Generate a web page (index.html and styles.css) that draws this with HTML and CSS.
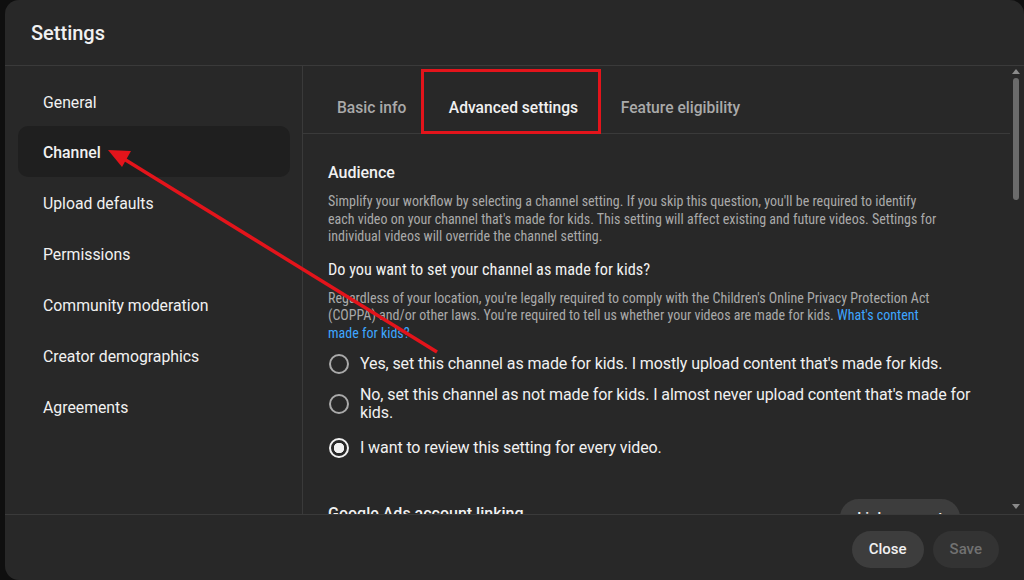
FILE: index.html
```html
<!DOCTYPE html>
<html lang="en">
<head>
    <title>Settings</title>
    <link rel="stylesheet" href="styles.css">
</head>
<body>
<div class="dialog">
    <div class="dialog_header">Settings</div>

    <div class="dialog_body">
        <!-- left menu -->
        <ul class="side_menu">
            <li class="side_item">General</li>
            <li class="side_item selected">Channel</li>
            <li class="side_item">Upload defaults</li>
            <li class="side_item">Permissions</li>
            <li class="side_item">Community moderation</li>
            <li class="side_item">Creator demographics</li>
            <li class="side_item">Agreements</li>
        </ul>

        <div class="main_panel">
            <div class="panel_inner">
                <div class="tabs">
                    <span class="tab">Basic info</span>
                    <span class="tab active">Advanced settings</span>
                    <span class="tab">Feature eligibility</span>
                </div>

                <div class="content">
                    <h2 class="section_title">Audience</h2>
                    <p class="section_text">
                        Simplify your workflow by selecting a channel setting. If you skip this question, you'll be required to identify<br>
                        each video on your channel that's made for kids. This setting will affect existing and future videos. Settings for<br>
                        individual videos will override the channel setting.
                    </p>

                    <h3 class="question">Do you want to set your channel as made for kids?</h3>
                    <p class="section_text">
                        Regardless of your location, you're legally required to comply with the Children's Online Privacy Protection Act<br>
                        (COPPA) and/or other laws. You're required to tell us whether your videos are made for kids.
                        <a class="link" href="#">What's content<br>made for kids?</a>
                    </p>

                    <div class="radio_group">
                        <label class="radio_row">
                            <span class="radio"></span>
                            <span class="radio_label">Yes, set this channel as made for kids. I mostly upload content that's made for kids.</span>
                        </label>
                        <label class="radio_row">
                            <span class="radio"></span>
                            <span class="radio_label">No, set this channel as not made for kids. I almost never upload content that's made for<br>kids.</span>
                        </label>
                        <label class="radio_row last">
                            <span class="radio checked"></span>
                            <span class="radio_label">I want to review this setting for every video.</span>
                        </label>
                    </div>

                    <div class="ads_row">
                        <h2 class="section_title">Google Ads account linking</h2>
                        <button type="button" class="pill_btn">Link account</button>
                    </div>
                </div>
            </div>

            <div class="scrollbar">
                <span class="sb_arrow up"></span>
                <span class="sb_thumb"></span>
                <span class="sb_arrow down"></span>
            </div>
        </div>
    </div>

    <div class="dialog_footer">
        <button type="button" class="pill_btn">Close</button>
        <button type="button" class="pill_btn" disabled>Save</button>
    </div>
</div>

<!-- red annotation drawn over the screenshot -->
<div class="mark_box"></div>
<svg class="mark_arrow" width="1024" height="580" viewBox="0 0 1024 580">
    <line x1="437" y1="352" x2="124" y2="159" stroke="#e3141b" stroke-width="3.5"/>
    <polygon points="108,150 131,151 122,167" fill="#e3141b"/>
</svg>
</body>
</html>
```

FILE: styles.css
```css
* {
    box-sizing: border-box;
}

body {
    margin: 0;
    background-color: #0f0f0f;
    font-family: Roboto, "Liberation Sans", Arial, sans-serif;
    color: #f1f1f1;
    overflow: hidden;
}

.dialog {
    margin-left: 5px;
    height: 580px;
    background-color: #282828;
    border-radius: 14px 14px 0 14px;
    display: flex;
    flex-direction: column;
}

.dialog_header {
    height: 66px;
    padding-left: 26px;
    line-height: 66px;
    font-size: 20px;
    font-weight: 500;
    border-bottom: 1px solid #3a3a3a;
}

.dialog_body {
    flex: 1;
    display: flex;
    min-height: 0;
}

.side_menu {
    list-style: none;
    margin: 0;
    width: 298px;
    padding: 9px 12px 0 13px;
    border-right: 1px solid #3a3a3a;
}

.side_item {
    height: 50.9px;
    line-height: 50.9px;
    padding: 2.5px 0 0 25px;
    font-size: 15.8px;
    color: #f1f1f1;
    border-radius: 10px;
}

.side_item.selected {
    background-color: #1f1f1f;
    font-weight: 500;
}

.main_panel {
    flex: 1;
    display: flex;
    min-width: 0;
}

.panel_inner {
    flex: 1;
    display: flex;
    flex-direction: column;
    min-width: 0;
}

.tabs {
    height: 68px;
    padding: 16px 0 0 12.7px;
    display: flex;
    align-items: center;
    border-bottom: 1px solid #3a3a3a;
}

.tab {
    padding: 0 21.3px;
    font-size: 15.6px;
    font-weight: 500;
    color: #aaaaaa;
}

.tab.active {
    color: #f1f1f1;
}

.content {
    flex: 1;
    overflow: hidden;
    padding: 28px 30px 0 25px;
}

.section_title {
    margin: 0;
    font-size: 16px;
    font-weight: 500;
    line-height: 22px;
    white-space: nowrap;
}

.section_text {
    margin: 9px 0 0;
    font-size: 14px;
    line-height: 17.5px;
    color: #aaaaaa;
    font-stretch: 75%;
    white-space: nowrap;
}

.question {
    margin: 13px 0 0;
    font-size: 16.3px;
    font-weight: 400;
    line-height: 22px;
    font-stretch: 75%;
}

.link {
    color: #3ea6ff;
    text-decoration: none;
}

.radio_group {
    margin-top: 12px;
    display: flex;
    flex-direction: column;
    gap: 12px;
}

.radio_row {
    display: flex;
    align-items: center;
    gap: 11px;
}

.radio_row.last {
    margin-top: 4px;
}

.radio {
    flex: none;
    width: 20px;
    height: 20px;
    margin-left: 1px;
    border: 2px solid #aaaaaa;
    border-radius: 50%;
}

.radio.checked {
    border-color: #f1f1f1;
    background: radial-gradient(circle, #f1f1f1 0 5px, transparent 5.5px);
}

.radio_label {
    font-size: 16px;
    line-height: 18px;
    font-stretch: 88.5%;
    letter-spacing: -0.1px;
    white-space: nowrap;
}

.ads_row {
    margin-top: 41px;
    display: flex;
    justify-content: space-between;
    align-items: flex-start;
    padding-right: 20px;
}

.ads_row .section_title {
    margin-top: 4px;
}

.pill_btn {
    height: 37px;
    padding: 0 17px;
    border: none;
    border-radius: 19px;
    background-color: #3d3d3d;
    color: #f1f1f1;
    font-family: Roboto, "Liberation Sans", Arial, sans-serif;
    font-size: 15px;
    font-weight: 500;
}

.pill_btn:disabled {
    background-color: #333333;
    color: #717171;
}

.scrollbar {
    width: 12px;
    display: flex;
    flex-direction: column;
    align-items: center;
    padding: 3px 0 5px;
    margin-right: 2px;
}

.sb_arrow {
    width: 0;
    height: 0;
    border-left: 4px solid transparent;
    border-right: 4px solid transparent;
}

.sb_arrow.up {
    border-bottom: 5px solid #8a8a8a;
}

.sb_arrow.down {
    margin-top: auto;
    border-top: 5px solid #8a8a8a;
}

.sb_thumb {
    margin-top: 4px;
    width: 6px;
    height: 122px;
    border-radius: 3px;
    background-color: #6b6b6b;
}

.dialog_footer {
    height: 66px;
    display: flex;
    justify-content: flex-end;
    align-items: center;
    gap: 9px;
    padding: 3px 25px 0 0;
    border-top: 1px solid #3a3a3a;
}

.mark_box {
    position: absolute;
    left: 421px;
    top: 69px;
    width: 180px;
    height: 65px;
    border: 3px solid #e3141b;
}

.mark_arrow {
    position: absolute;
    left: 0;
    top: 0;
}
```
